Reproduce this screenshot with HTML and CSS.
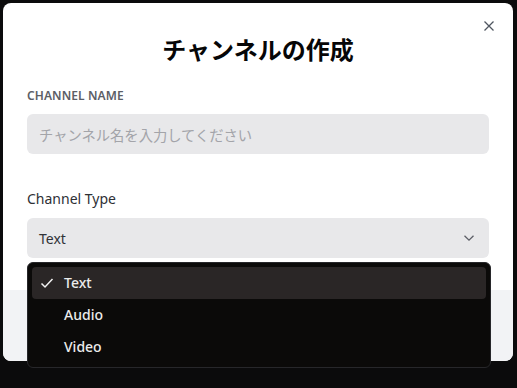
FILE: index.html
```html
<!DOCTYPE html>
<html lang="ja">
<head>
    <meta charset="UTF-8">
    <meta name="viewport" content="width=device-width, initial-scale=1.0">
    <title>チャンネルの作成</title>
    <link rel="stylesheet" href="styles.css">
</head>
<body>
    <div class="modal">
        <button class="close" type="button" aria-label="close">
            <svg width="12" height="12" viewBox="0 0 12 12"><path d="M1.5 1.5L10.5 10.5M10.5 1.5L1.5 10.5" stroke="#4f5660" stroke-width="1.3" fill="none"/></svg>
        </button>
        <div class="modal-body">
            <h1 class="title">チャンネルの作成</h1>
            <div class="field">
                <label class="caps-label" for="name">CHANNEL NAME</label>
                <input class="text-input" id="name" type="text" placeholder="チャンネル名を入力してください">
            </div>
            <div class="field type-field">
                <label class="plain-label">Channel Type</label>
                <div class="select-wrap">
                    <div class="select">
                        <span>Text</span>
                        <svg width="12" height="8" viewBox="0 0 12 8"><path d="M1.5 1.8L6 6.2L10.5 1.8" stroke="#5c5e66" stroke-width="1.3" fill="none"/></svg>
                    </div>
                    <ul class="menu">
                        <li class="menu-item selected">
                            <svg class="check" width="14" height="14" viewBox="0 0 14 14"><path d="M1.5 7.5L5 11L12.5 3" stroke="#f2f2f2" stroke-width="1.5" fill="none"/></svg>
                            <span>Text</span>
                        </li>
                        <li class="menu-item"><span>Audio</span></li>
                        <li class="menu-item"><span>Video</span></li>
                    </ul>
                </div>
            </div>
        </div>
        <div class="modal-footer"></div>
    </div>
</body>
</html>
```

FILE: styles.css
```css
body{
    margin: 0;
    padding: 3px;
    background-color: #0b0b0c;
    font-family: "Noto Sans", "Open Sans", "Noto Sans CJK JP", sans-serif;
    height: 388px;
    box-sizing: border-box;
    overflow: hidden;
}

.modal{
    position: relative;
    width: 510px;
    height: 358px;
    background-color: #ffffff;
    border-radius: 8px;
    display: flex;
    flex-direction: column;
}

.close{
    position: absolute;
    top: 14px;
    right: 15px;
    width: 18px;
    height: 18px;
    padding: 0;
    border: none;
    background: none;
    display: flex;
    align-items: center;
    justify-content: center;
}

.modal-body{
    padding: 31px 24px 32px;
}

.title{
    margin: 0;
    text-align: center;
    font-family: "Noto Sans CJK JP", sans-serif;
    font-size: 24px;
    line-height: 30px;
    font-weight: 700;
    color: #060607;
}

.field{
    display: flex;
    flex-direction: column;
    margin-top: 24px;
}

.type-field{
    margin-top: 35px;
}

.caps-label{
    font-size: 12px;
    line-height: 16px;
    font-weight: 600;
    color: #5c5e66;
    letter-spacing: 0.1px;
    margin-bottom: 10px;
}

.plain-label{
    font-size: 14px;
    line-height: 20px;
    color: #2e3035;
    margin-bottom: 9px;
}

.text-input{
    height: 40px;
    border: none;
    border-radius: 6px;
    background-color: #e8e8ea;
    padding: 0 12px;
    font-family: "Noto Sans CJK JP", sans-serif;
    font-size: 14.3px;
    outline: none;
}

.text-input::placeholder{
    color: #a3a4a9;
}

.select-wrap{
    position: relative;
}

.select{
    height: 40px;
    border-radius: 6px;
    background-color: #e8e8ea;
    padding: 0 14px 0 12px;
    display: flex;
    align-items: center;
    justify-content: space-between;
    font-size: 14px;
    color: #313338;
}

.modal-footer{
    margin-top: auto;
    height: 71px;
    background-color: #f2f3f5;
    border-radius: 0 0 8px 8px;
}

.menu{
    position: absolute;
    top: 44px;
    left: 0;
    width: 464px;
    margin: 0;
    padding: 4px;
    box-sizing: border-box;
    list-style: none;
    background-color: #0b0a09;
    border: 1px solid #27272a;
    border-radius: 6px;
}

.menu-item{
    height: 32px;
    display: flex;
    align-items: center;
    padding-left: 32px;
    padding-bottom: 1px;
    box-sizing: border-box;
    border-radius: 4px;
    font-size: 14px;
    font-weight: 500;
    color: #ececec;
    position: relative;
}

.menu-item.selected{
    background-color: #2a2626;
}

.check{
    position: absolute;
    left: 8px;
    top: 9px;
}
```
